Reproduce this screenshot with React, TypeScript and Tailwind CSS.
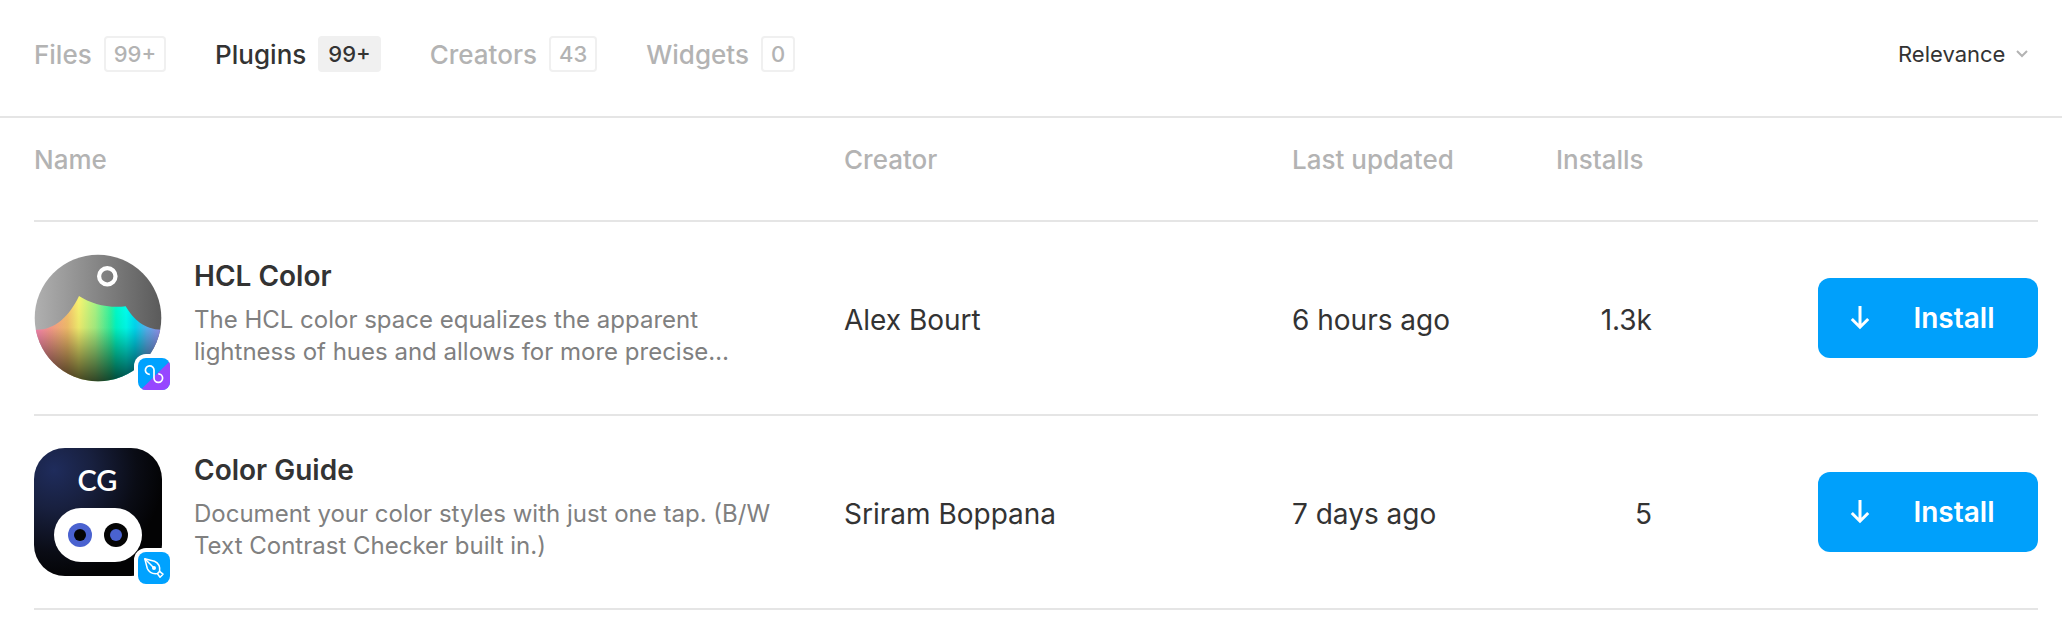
import { useState } from "react";
import type { ReactNode } from "react";

type Tab = { label: string; count: string };

const tabs: Tab[] = [
  { label: "Files", count: "99+" },
  { label: "Plugins", count: "99+" },
  { label: "Creators", count: "43" },
  { label: "Widgets", count: "0" },
];

function HclIcon() {
  return (
    <svg viewBox="0 0 128 128" className="size-32" aria-hidden="true">
      <defs>
        <linearGradient id="hcl-grey" x1="0" x2="1" y1="0" y2="0">
          <stop offset="0" stopColor="#b0b0b0" />
          <stop offset="1" stopColor="#5a5a5a" />
        </linearGradient>
        <linearGradient id="hcl-hue" gradientUnits="userSpaceOnUse" x1="0" x2="128" y1="0" y2="0">
          <stop offset="0" stopColor="#ff86b8" />
          <stop offset="0.12" stopColor="#fd9c90" />
          <stop offset="0.26" stopColor="#f6c06c" />
          <stop offset="0.35" stopColor="#f6f270" />
          <stop offset="0.48" stopColor="#a6f283" />
          <stop offset="0.6" stopColor="#2ff3a0" />
          <stop offset="0.64" stopColor="#00fbc8" />
          <stop offset="0.72" stopColor="#00ffee" />
          <stop offset="0.79" stopColor="#00dcf4" />
          <stop offset="0.88" stopColor="#5ab4f4" />
          <stop offset="1" stopColor="#a08ff0" />
        </linearGradient>
        <linearGradient id="hcl-shade" gradientUnits="userSpaceOnUse" x1="0" x2="0" y1="48" y2="128">
          <stop offset="0" stopColor="#000" stopOpacity="0" />
          <stop offset="0.32" stopColor="#000" stopOpacity="0.05" />
          <stop offset="1" stopColor="#000" stopOpacity="0.72" />
        </linearGradient>
        <clipPath id="hcl-circle">
          <circle cx="64" cy="64" r="63.3" />
        </clipPath>
      </defs>
      <g clipPath="url(#hcl-circle)">
        <rect width="128" height="128" fill="url(#hcl-grey)" />
        <path
          d="M0 75.7C20 77 35 63 45 42C57 50 75 54.5 91.7 52.3C99 65 111 76 128 75.7V128H0Z"
          fill="url(#hcl-hue)"
        />
        <path
          d="M0 75.7C20 77 35 63 45 42C57 50 75 54.5 91.7 52.3C99 65 111 76 128 75.7V128H0Z"
          fill="url(#hcl-shade)"
        />
        <circle cx="73.3" cy="22.3" r="8.2" fill="none" stroke="#fff" strokeWidth="4.2" />
      </g>
    </svg>
  );
}

function GuideIcon() {
  return (
    <svg viewBox="0 0 128 128" className="size-32" aria-hidden="true">
      <defs>
        <radialGradient id="guide-night" gradientUnits="userSpaceOnUse" cx="20" cy="22" r="110">
          <stop offset="0" stopColor="#1f2c5c" />
          <stop offset="0.35" stopColor="#18203f" />
          <stop offset="0.75" stopColor="#0a0c15" />
          <stop offset="1" stopColor="#030304" />
        </radialGradient>
      </defs>
      <rect width="128" height="128" rx="31" fill="url(#guide-night)" />
      <text x="63.5" y="43" textAnchor="middle" fill="#fff" className="font-['Lato',sans-serif] text-[29px] font-semibold">
        CG
      </text>
      <rect x="20" y="60" width="88" height="54" rx="27" fill="#fff" />
      <circle cx="46" cy="87" r="12" fill="#4a62d0" />
      <circle cx="46" cy="87" r="6" fill="#050505" />
      <circle cx="82" cy="87" r="12" fill="#050505" />
      <circle cx="82" cy="87" r="6" fill="#4a62d0" />
    </svg>
  );
}

function BothEditorsBadge() {
  return (
    <svg viewBox="0 0 32 32" className="size-8 rounded-lg" aria-hidden="true">
      <rect width="32" height="32" fill="#00a2ff" />
      <path d="M2.5 32L32 3V32Z" fill="#9747ff" />
      <path
        d="M11.8 16.4A4.3 4.3 0 1 1 16 12.1V20.1A4.3 4.3 0 1 0 20.3 15.8"
        fill="none"
        stroke="#fff"
        strokeWidth="1.7"
      />
    </svg>
  );
}

function DesignBadge() {
  return (
    <svg viewBox="0 0 32 32" className="size-8 rounded-lg" aria-hidden="true">
      <rect width="32" height="32" fill="#00a2ff" />
      <g fill="none" stroke="#fff" strokeWidth="1.5" strokeLinejoin="round">
        <path d="M6.8 6.8L16.5 9.3C20.3 11 22.3 14 21.6 19.4L19.4 21.6C14 22.3 11 20.3 9.3 16.5Z" />
        <path d="M21.6 19.4L25 22.2L22 25.2L19.4 21.6" />
        <path d="M6.8 6.8L16 16" />
      </g>
      <circle cx="16" cy="16" r="2" fill="#fff" />
    </svg>
  );
}

type Plugin = {
  name: string;
  description: string;
  creator: string;
  updated: string;
  installs: string;
  icon: ReactNode;
  badge: ReactNode;
};

const plugins: Plugin[] = [
  {
    name: "HCL Color",
    description: "The HCL color space equalizes the apparent lightness of hues and allows for more precise…",
    creator: "Alex Bourt",
    updated: "6 hours ago",
    installs: "1.3k",
    icon: <HclIcon />,
    badge: <BothEditorsBadge />,
  },
  {
    name: "Color Guide",
    description: "Document your color styles with just one tap. (B/W Text Contrast Checker built in.)",
    creator: "Sriram Boppana",
    updated: "7 days ago",
    installs: "5",
    icon: <GuideIcon />,
    badge: <DesignBadge />,
  },
];

function PluginRow({ plugin }: { plugin: Plugin }) {
  return (
    <tr className="text-[28px] leading-8 *:border-b-2 *:border-[#e5e5e5]">
      <td className="py-8">
        <div className="flex gap-8">
          <div className="relative size-32 shrink-0">
            {plugin.icon}
            <div className="absolute -right-3 -bottom-3 rounded-xl bg-white p-1">{plugin.badge}</div>
          </div>
          <div className="max-w-[580px] pt-1">
            <h2 className="text-[28px] leading-9 font-semibold">{plugin.name}</h2>
            <p className="mt-2.5 text-2xl leading-8 text-[#808080]">{plugin.description}</p>
          </div>
        </div>
      </td>
      <td className="pt-1">{plugin.creator}</td>
      <td className="pt-1">{plugin.updated}</td>
      <td className="pt-1 text-right">{plugin.installs}</td>
      <td>
        <button
          type="button"
          aria-label={`Install ${plugin.name}`}
          className="ml-auto flex h-20 w-[220px] items-center rounded-xl bg-[#00a0fb] pl-8 font-semibold text-white"
        >
          <svg viewBox="0 0 20 24" className="h-6 w-5" fill="none" stroke="currentColor" strokeWidth="3" aria-hidden="true">
            <path d="M10 0V21.5M1.8 13L10 21.2L18.2 13" />
          </svg>
          <span className="flex-1 text-center">Install</span>
        </button>
      </td>
    </tr>
  );
}

export default function App() {
  const [active, setActive] = useState("Plugins");

  return (
    <main className="min-h-screen bg-white font-['Inter',sans-serif] text-[#333]">
      <header className="flex items-center justify-between border-b-2 border-[#e5e5e5] pt-9 pr-6 pb-11 pl-[34px]">
        <nav className="flex gap-[49px]">
          {tabs.map((tab) => {
            const on = tab.label === active;
            return (
              <button
                key={tab.label}
                type="button"
                onClick={() => setActive(tab.label)}
                className={`flex h-9 items-center gap-3 text-[26px] font-medium ${on ? "text-[#333]" : "text-[#b3b3b3]"}`}
              >
                {tab.label}
                <span
                  className={`flex h-9 items-center rounded border-2 px-2 text-[22px] ${
                    on ? "border-[#f0f0f0] bg-[#f0f0f0]" : "border-[#f0f0f0]"
                  }`}
                >
                  {tab.count}
                </span>
              </button>
            );
          })}
        </nav>
        <div className="relative flex h-9 items-center">
          <select aria-label="Sort by" className="appearance-none bg-transparent pr-8 text-[22px]">
            <option>Relevance</option>
          </select>
          <svg
            viewBox="0 0 12 8"
            className="pointer-events-none absolute right-2.5 h-2 w-3"
            fill="none"
            stroke="#b3b3b3"
            strokeWidth="2"
            aria-hidden="true"
          >
            <path d="M1 1L6 6L11 1" />
          </svg>
        </div>
      </header>

      <div className="pr-6 pl-[34px]">
        <table className="w-full table-fixed border-separate border-spacing-0 text-left">
          <colgroup>
            <col />
            <col className="w-[448px]" />
            <col className="w-[264px]" />
            <col className="w-24" />
            <col className="w-[386px]" />
          </colgroup>
          <thead>
            <tr className="text-[26px] leading-8 text-[#b3b3b3] *:border-b-2 *:border-[#e5e5e5] *:pt-[26px] *:pb-11 *:font-medium">
              <th scope="col">Name</th>
              <th scope="col">Creator</th>
              <th scope="col">Last updated</th>
              <th scope="col">Installs</th>
              <td />
            </tr>
          </thead>
          <tbody>
            {plugins.map((plugin) => (
              <PluginRow key={plugin.name} plugin={plugin} />
            ))}
          </tbody>
        </table>
      </div>
    </main>
  );
}
